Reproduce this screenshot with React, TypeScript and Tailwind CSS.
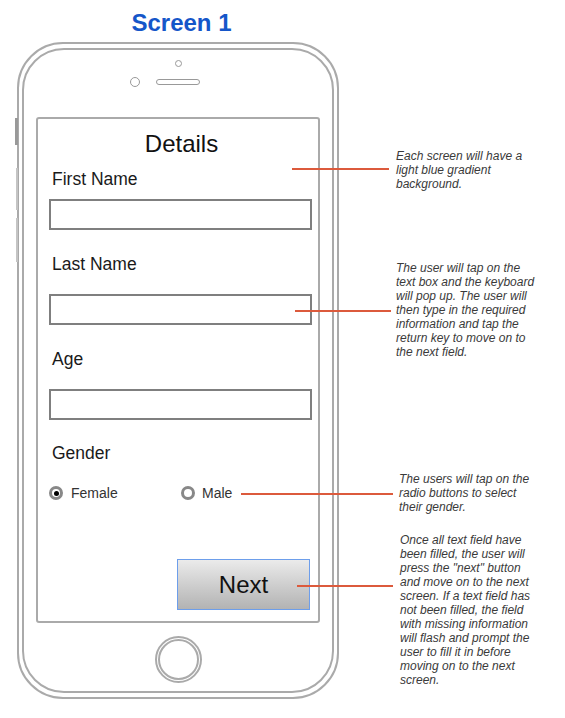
const note = "text-[12px] leading-[14px] italic text-[#3a3a3a] whitespace-nowrap";
const label = "ml-[14px] text-[17.5px] leading-[20px] text-[#1a1a1a]";
const field = "ml-[11px] w-[263px] h-[31px] border-2 border-[#7f7f7f] bg-white";

function Radio({ checked }: { checked?: boolean }) {
  return (
    <span className="w-[14px] h-[14px] rounded-full border-[3px] border-[#888] bg-white flex items-center justify-center">
      {checked ? <span className="w-[5px] h-[5px] rounded-full bg-black" /> : null}
    </span>
  );
}

export default function App() {
  return (
    <div className="relative w-[565px] h-[718px] bg-white flex overflow-hidden font-['Liberation_Sans',Arial,sans-serif]">
      {/* phone mockup */}
      <div className="w-[396px] shrink-0 flex flex-col">
        <h1 className="mt-[9px] w-[363px] text-center text-[24px] leading-[28px] font-bold text-[#1556c9]">
          Screen 1
        </h1>
        <div className="relative mt-[5px] ml-[17px] w-[322px] h-[657px] rounded-[46px] border-2 border-[#aaa] px-[3px] py-[4px]">
          <span className="absolute left-[-4px] top-[74px] w-[3px] h-[27px] bg-[#999]" />
          <span className="absolute left-[-3px] top-[124px] w-[2px] h-[42px] bg-[#c4c4c4]" />
          <span className="absolute left-[-3px] top-[174px] w-[2px] h-[44px] bg-[#c4c4c4]" />
          <div className="h-full rounded-[42px] border-2 border-[#aaa] flex flex-col items-center">
            <span className="mt-[10px] w-[7px] h-[7px] rounded-full border-[1.5px] border-[#999]" />
            <div className="relative mt-[10px] h-[10px] w-[44px] flex items-center">
              <span className="absolute left-[-26px] top-0 w-[10px] h-[10px] rounded-full border-[1.5px] border-[#999]" />
              <span className="w-[44px] h-[6px] rounded-full border-[1.5px] border-[#999]" />
            </div>

            {/* screen */}
            <div className="mt-[30px] w-[284px] h-[506px] border-2 border-[#aaa] rounded-[3px] flex flex-col">
              <div className="mt-[11px] pl-[7px] text-center text-[24px] leading-[28px] text-[#111]">Details</div>
              <div className={`mt-[11px] ${label}`}>First Name</div>
              <div className={`mt-[10px] ${field}`} />
              <div className={`mt-[24px] ${label}`}>Last Name</div>
              <div className={`mt-[20px] ${field}`} />
              <div className={`mt-[24px] ${label}`}>Age</div>
              <div className={`mt-[20px] ${field}`} />
              <div className={`mt-[23px] ${label}`}>Gender</div>
              <div className="mt-[22px] ml-[11px] h-[16px] flex items-center text-[14px] text-[#333]">
                <div className="w-[132px] flex items-center gap-[8px]">
                  <Radio checked />
                  <span>Female</span>
                </div>
                <div className="flex items-center gap-[7px]">
                  <Radio />
                  <span>Male</span>
                </div>
              </div>
              <button className="mt-[58px] self-end mr-[8px] w-[133px] h-[51px] border border-[#6d9eeb] bg-linear-to-b from-[#ebebeb] to-[#b3b3b3] text-[24px] text-[#111]">
                Next
              </button>
            </div>

            <div className="mt-[13px] w-[47px] h-[47px] rounded-full border-2 border-[#aaa] flex items-center justify-center">
              <span className="w-[41px] h-[41px] rounded-full border-2 border-[#aaa]" />
            </div>
          </div>
        </div>
      </div>

      {/* annotations */}
      <div className="flex flex-col">
        <p className={`mt-[149px] ${note}`}>
          Each screen will have a<br />light blue gradient<br />background.
        </p>
        <p className={`mt-[70px] ${note}`}>
          The user will tap on the<br />text box and the keyboard<br />will pop up. The user will<br />then type in the required
          <br />information and tap the<br />return key to move on to<br />the next field.
        </p>
        <p className={`mt-[113px] ml-[3px] ${note}`}>
          The users will tap on the<br />radio buttons to select<br />their gender.
        </p>
        <p className={`mt-[19px] ml-[4px] ${note}`}>
          Once all text field have<br />been filled, the user will<br />press the "next" button<br />and move on to the next
          <br />screen. If a text field has<br />not been filled, the field<br />with missing information
          <br />will flash and prompt the<br />user to fill it in before<br />moving on to the next<br />screen.
        </p>
      </div>

      {/* connectors */}
      <span className="absolute left-[292px] top-[168px] w-[97px] h-[2px] bg-[#dc5a3c]" />
      <span className="absolute left-[295px] top-[310px] w-[96px] h-[2px] bg-[#dc5a3c]" />
      <span className="absolute left-[241px] top-[493px] w-[152px] h-[2px] bg-[#dc5a3c]" />
      <span className="absolute left-[297px] top-[585px] w-[96px] h-[2px] bg-[#dc5a3c]" />
    </div>
  );
}
